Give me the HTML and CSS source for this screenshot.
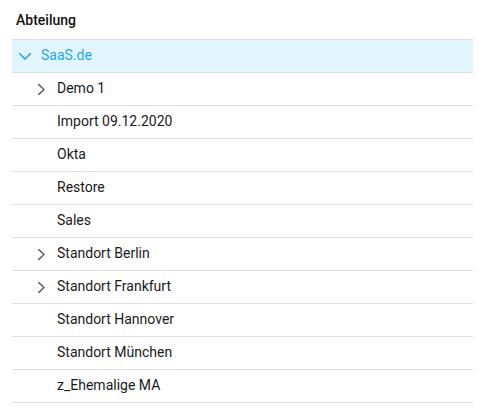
FILE: index.html
```html
<!doctype html>
<html>
<head>
<meta charset="utf-8">
<title>Abteilung</title>
<link rel="stylesheet" href="styles.css">
</head>
<body>
<div class="tree">
	<div class="head">Abteilung</div>
	<ul class="nodes">
		<li class="node open sel"><span class="tog"><svg width="12" height="7" viewBox="0 0 12 7"><polyline points="0.7,0.7 6,6 11.3,0.7"/></svg></span><span class="lbl">SaaS.de</span></li>
		<li class="node l1"><span class="tog"><svg width="7" height="11" viewBox="0 0 7 11"><polyline points="0.8,0.6 6,5.5 0.8,10.4"/></svg></span><span class="lbl">Demo 1</span></li>
		<li class="node l1"><span class="tog"></span><span class="lbl">Import 09.12.2020</span></li>
		<li class="node l1"><span class="tog"></span><span class="lbl">Okta</span></li>
		<li class="node l1"><span class="tog"></span><span class="lbl">Restore</span></li>
		<li class="node l1"><span class="tog"></span><span class="lbl">Sales</span></li>
		<li class="node l1"><span class="tog"><svg width="7" height="11" viewBox="0 0 7 11"><polyline points="0.8,0.6 6,5.5 0.8,10.4"/></svg></span><span class="lbl">Standort Berlin</span></li>
		<li class="node l1"><span class="tog"><svg width="7" height="11" viewBox="0 0 7 11"><polyline points="0.8,0.6 6,5.5 0.8,10.4"/></svg></span><span class="lbl">Standort Frankfurt</span></li>
		<li class="node l1"><span class="tog"></span><span class="lbl">Standort Hannover</span></li>
		<li class="node l1"><span class="tog"></span><span class="lbl">Standort München</span></li>
		<li class="node l1"><span class="tog"></span><span class="lbl">z_Ehemalige MA</span></li>
	</ul>
</div>
</body>
</html>
```
FILE: styles.css
```css
body {
	margin: 0;
	font-family: Roboto, "Liberation Sans", sans-serif;
	font-size: 14px;
	color: #1a1a1a;
	background: #fff;
}
.tree {
	padding: 0 8px 0 12px;
}
.head {
	padding: 11px 4px 10px;
	line-height: 18px;
	font-weight: 500;
	color: #111;
}
.nodes {
	list-style: none;
	margin: 0;
	padding: 0;
	border-top: 1px solid #e0e0e0;
}
.node {
	display: flex;
	align-items: center;
	height: 32px;
	padding-left: 1px;
	border-bottom: 1px solid #e0e0e0;
}
.node.l1 {
	padding-left: 17px;
}
.tog {
	width: 24px;
	display: flex;
	justify-content: center;
	align-items: center;
	margin-right: 4px;
}
.tog svg {
	display: block;
	fill: none;
	stroke: #5b6470;
	stroke-width: 1.6;
	stroke-linecap: round;
	stroke-linejoin: round;
}
.lbl {
	line-height: 18px;
	margin-top: -2px;
}
.sel {
	background: #e1f5fe;
}
.sel .lbl {
	color: #1ea8f0;
}
.sel .tog svg {
	stroke: #1ea8f0;
}
```
